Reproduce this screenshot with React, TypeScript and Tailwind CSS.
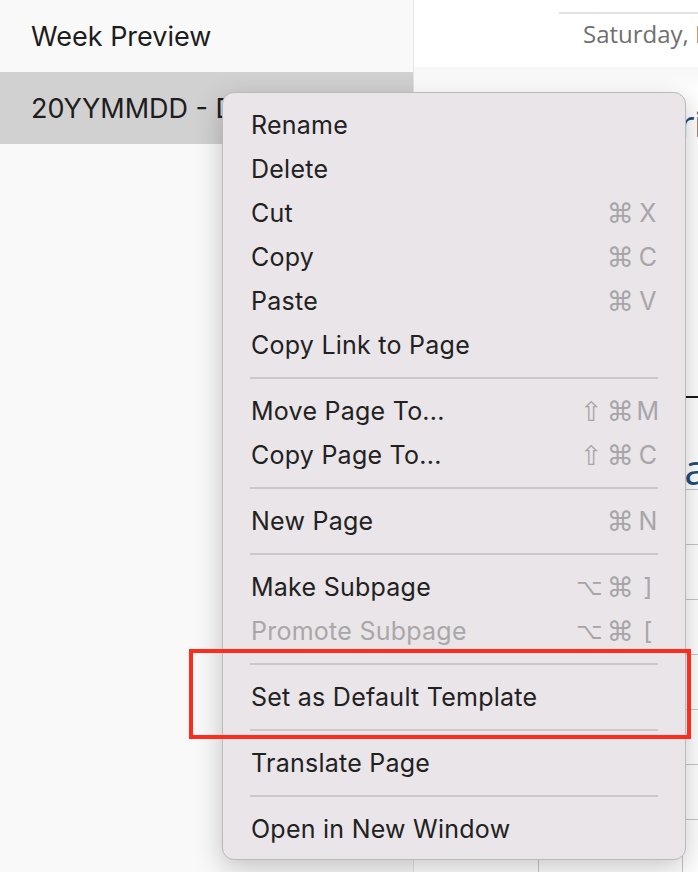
import React from 'react';

type Item =
  | { kind: 'item'; label: string; mods?: string[]; keyGlyph?: string; disabled?: boolean }
  | { kind: 'sep' };

const menuItems: Item[] = [
  { kind: 'item', label: 'Rename' },
  { kind: 'item', label: 'Delete' },
  { kind: 'item', label: 'Cut', mods: ['⌘'], keyGlyph: 'X' },
  { kind: 'item', label: 'Copy', mods: ['⌘'], keyGlyph: 'C' },
  { kind: 'item', label: 'Paste', mods: ['⌘'], keyGlyph: 'V' },
  { kind: 'item', label: 'Copy Link to Page' },
  { kind: 'sep' },
  { kind: 'item', label: 'Move Page To...', mods: ['⇧', '⌘'], keyGlyph: 'M' },
  { kind: 'item', label: 'Copy Page To...', mods: ['⇧', '⌘'], keyGlyph: 'C' },
  { kind: 'sep' },
  { kind: 'item', label: 'New Page', mods: ['⌘'], keyGlyph: 'N' },
  { kind: 'sep' },
  { kind: 'item', label: 'Make Subpage', mods: ['⌥', '⌘'], keyGlyph: ']' },
  { kind: 'item', label: 'Promote Subpage', mods: ['⌥', '⌘'], keyGlyph: '[', disabled: true },
  { kind: 'sep' },
  { kind: 'item', label: 'Set as Default Template' },
  { kind: 'sep' },
  { kind: 'item', label: 'Translate Page' },
  { kind: 'sep' },
  { kind: 'item', label: 'Open in New Window' },
];

const Shortcut: React.FC<{ mods: string[]; keyGlyph: string }> = ({ mods, keyGlyph }) => (
  <div className="flex items-center text-[#a8a5a8]">
    <div className="flex items-center gap-[4px] font-['DejaVu_Sans',sans-serif] leading-none">
      {mods.map((m, i) => (
        <span key={i} className={m === '⌥' ? 'text-[23px]' : 'text-[27px]'}>
          {m}
        </span>
      ))}
    </div>
    <span className="w-[24px] ml-[2px] text-center">{keyGlyph}</span>
  </div>
);

const ContextMenu: React.FC = () => (
  <div className="absolute left-[222px] top-[92px] w-[464px] rounded-[12px] border border-[#bcb9bb] bg-[#e9e5e8] pt-[10px] pb-[8px] shadow-[0_8px_28px_rgba(0,0,0,0.22)]">
    {menuItems.map((it, i) =>
      it.kind === 'sep' ? (
        <div key={i} className="h-[22px] flex items-center px-[27px]">
          <div className="h-[2px] w-full bg-[#cbc7ca]" />
        </div>
      ) : (
        <div
          key={i}
          className={`h-[44px] flex items-center justify-between pl-[28px] pr-[25px] text-[25px] leading-[44px] tracking-[0.25px] ${
            it.disabled ? 'text-[#aaa7a9]' : 'text-[#222122]'
          }`}
        >
          <span>{it.label}</span>
          {it.mods && it.keyGlyph && <Shortcut mods={it.mods} keyGlyph={it.keyGlyph} />}
        </div>
      )
    )}
  </div>
);

export default function App() {
  const rows = [0, 1, 2, 3, 4, 5, 6];
  return (
    <div className="relative w-[698px] h-[872px] overflow-hidden flex bg-white font-['Inter',sans-serif]">
      <aside className="w-[414px] shrink-0 bg-[#f9f9f9] border-r border-[#e4e4e4]">
        <div className="h-[72px] flex items-center pl-[31px] pt-[2px] text-[27px] text-[#1d1d1d]">Week Preview</div>
        <div className="h-[72px] flex items-center pl-[31px] pt-[2px] text-[27px] text-[#1d1d1d] bg-[#d1d1d1] whitespace-nowrap">
          20YYMMDD - Daily Template
        </div>
      </aside>

      <main className="flex-1 min-w-0 bg-white font-['Open_Sans',sans-serif] whitespace-nowrap">
        <div className="mt-[12px] ml-[145px] h-[2px] bg-[#e2e2e2]" />
        <div className="mt-[6px] ml-[169px] text-[24px] leading-[28px] text-[#707070]">Saturday, November 2</div>
        <div className="mt-[19px] h-[24px] bg-gradient-to-b from-black/[0.035] to-transparent" />
        <div className="mt-[11px] ml-[244px] text-[36px] leading-[44px] text-[#1f4e79]">Priorities</div>
        <div className="mt-[250px] ml-[150px] h-[2px] bg-[#1a1a1a]" />
        <div className="mt-[51px] ml-[247px] text-[42px] leading-[40px] text-[#1f4e79]">Tasks</div>
        <div className="ml-[124px] border-l border-t border-[#c6c6c6]">
          {rows.map((r) => (
            <div key={r} className="h-[55px] flex border-b border-[#c6c6c6]">
              <div className="w-[144px] border-r border-[#c6c6c6]" />
              <div className="flex-1" />
            </div>
          ))}
        </div>
      </main>

      <ContextMenu />

      <div className="absolute left-[189px] top-[649px] w-[502px] h-[90px] border-[4px] border-[#ff2b1f]" />
    </div>
  );
}
